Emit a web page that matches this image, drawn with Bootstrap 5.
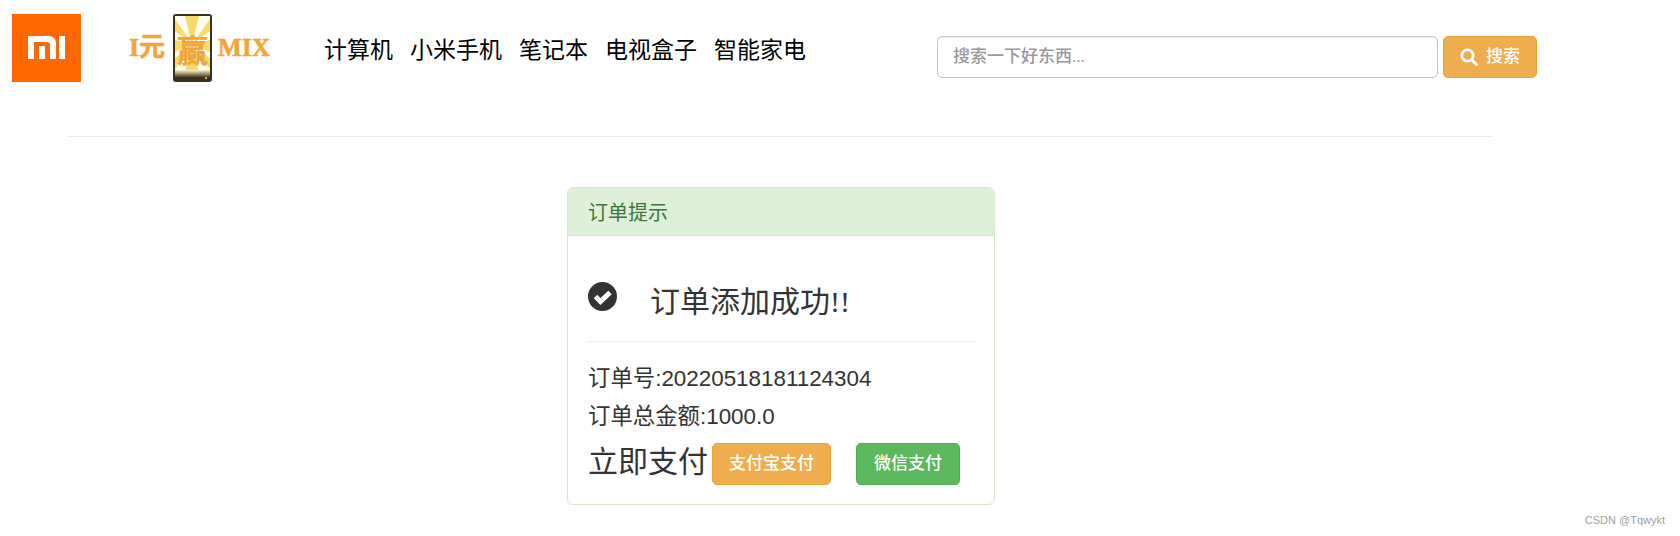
<!DOCTYPE html>
<html lang="zh-CN">
<head>
<meta charset="utf-8">
<title>订单提示</title>
<link rel="stylesheet" href="https://cdn.jsdelivr.net/npm/bootstrap@5.3.0/dist/css/bootstrap.min.css">
<style>
html,body{height:536px;overflow:hidden}
body{position:relative;background:#fff;color:#333;font-family:"Liberation Sans","Noto Sans CJK SC",sans-serif}
.site-head{height:136px;padding:14px 0 0 12px}
.mi-logo{width:69px;height:68px;display:block;flex:none}
.win-logo{width:142px;height:68px;display:block;flex:none;margin-left:48px}
.main-nav{margin-left:53px;margin-top:20px;gap:17px}
.main-nav a{color:#000;font-size:23px;line-height:32px;text-decoration:none;font-weight:400;padding:0}
.search-box{width:600px;margin-top:22px;gap:5px}
.search-spacer{width:131px;flex:none}
.search-box .form-control{width:501px;height:42px;flex:none;border:1px solid #c4c4c4;border-radius:5px;font:500 17px/1.4 "Liberation Serif","Noto Sans CJK SC",serif;padding:6px 15px;box-shadow:inset 0 1px 1px rgba(0,0,0,.075)}
.search-box .form-control::placeholder{color:#999;opacity:1}
.act-btn{font:500 17px/24px "Liberation Serif","Noto Sans CJK SC",serif;color:#fff;border-radius:5px;height:42px;padding:8px 16px}
.act-btn:hover{color:#fff}
.btn-orange{background:#f0ad4e;border:1px solid #eea236}
.btn-green{background:#5cb85c;border:1px solid #4cae4c}
.search-btn{width:94px;padding:8px 0;display:flex;align-items:center;justify-content:center;gap:8px}
.head-rule{margin:0 187px 0 68px;border:0;border-top:1px solid #eee;opacity:1}
.order-panel{width:428px;height:318px;margin:50px 0 0 567px;border:1px solid #d6e9c6;border-radius:6px;--bs-card-bg:#fff}
.order-panel .card-header{height:48px;background:#dff0d8;color:#3c763d;border-bottom:1px solid #d6e9c6;font:400 20px/26px "Liberation Serif","Noto Sans CJK SC",serif;padding:12px 20px;border-radius:5px 5px 0 0}
.order-panel .card-body{padding:46px 19px 0 20px}
.ok-icon{width:29px;height:29px;flex:none}
.ok-text{font:400 30px/36px "Liberation Serif","Noto Sans CJK SC",serif;margin:2px 0 0 33px;color:#333}
.ok-row{height:59px}
.panel-rule{margin:0 0 18px -1px;border:0;border-top:1px solid #eee;opacity:1}
.order-line{font-size:22.4px;line-height:38px;margin:0;color:#333}
.pay-row{margin-top:5px}
.pay-label{font:400 30px/42px "Liberation Serif","Noto Sans CJK SC",serif;color:#333;margin-right:4px}
.pay-row .act-btn{margin-top:2px}
.pay-gap{margin-left:25px;padding-left:17px;padding-right:17px}
.watermark{position:absolute;right:15px;bottom:9px;font:11px/13px "Liberation Sans",sans-serif;color:#a0a0a0}
</style>
</head>
<body>
<header class="site-head d-flex align-items-start">
  <svg class="mi-logo" viewBox="0 0 69 68" role="img" aria-label="小米">
    <rect width="69" height="68" fill="#ff6700"/>
    <path fill="#fff" d="M16 22H37C41 22 44 25 44 29V45H38V31C38 29 37 28 35 28H22V45H16ZM27 32H33V45H27ZM47 22H53V45H47Z"/>
  </svg>
  <svg class="win-logo" viewBox="0 0 142 68" role="img" aria-label="1元赢MIX">
    <defs><linearGradient id="chin" x1="0" y1="0" x2="0" y2="1"><stop offset="0" stop-color="#fff3c4"/><stop offset="1" stop-color="#2e2410"/></linearGradient></defs>
    <rect x="44" y="0" width="39" height="68" rx="3" fill="#3b3019"/>
    <rect x="46" y="2" width="35" height="60" fill="#fffdf2"/>
    <path fill="#f9d96b" d="M63 30 56 2H70ZM63 30 46 5V17ZM63 30 81 5V17ZM63 30 46 26V38ZM63 30 81 26V38ZM63 30 46 44V55ZM63 30 81 44V55ZM63 30 55 62H71Z"/>
    <rect x="46" y="56" width="35" height="8" fill="url(#chin)"/>
    <circle cx="77" cy="64" r="1.2" fill="#bfa76a"/>
    <text x="63.5" y="48" text-anchor="middle" font-family="Noto Sans CJK SC" font-weight="900" font-size="31" fill="#efa73b">赢</text>
    <text x="0" y="42" font-family="Liberation Serif,Noto Sans CJK SC,serif" font-weight="700" font-size="26" fill="#efa73b" stroke="#efa73b" stroke-width=".6">I元</text>
    <text x="89" y="42" font-family="Liberation Serif,serif" font-weight="700" font-size="25" fill="#efa73b" stroke="#efa73b" stroke-width=".6" textLength="52">MIX</text>
  </svg>
  <nav class="nav main-nav flex-nowrap">
    <a class="nav-link" href="#">计算机</a>
    <a class="nav-link" href="#">小米手机</a>
    <a class="nav-link" href="#">笔记本</a>
    <a class="nav-link" href="#">电视盒子</a>
    <a class="nav-link" href="#">智能家电</a>
  </nav>
  <div class="search-spacer"></div>
  <form class="search-box d-flex">
    <input class="form-control" type="text" placeholder="搜索一下好东西...">
    <button class="btn act-btn btn-orange search-btn" type="button">
      <svg width="18" height="18" viewBox="0 0 18 18" aria-hidden="true"><circle cx="7.5" cy="7.5" r="5.7" fill="none" stroke="#fff" stroke-width="2.8"/><path d="M11.5 11.5 16.5 16.5" stroke="#fff" stroke-width="3" stroke-linecap="round"/></svg>
      <span>搜索</span>
    </button>
  </form>
</header>
<hr class="head-rule">
<section class="card order-panel">
  <div class="card-header">订单提示</div>
  <div class="card-body">
    <div class="ok-row d-flex align-items-start">
      <svg class="ok-icon" viewBox="0 0 29 29" aria-hidden="true"><circle cx="14.5" cy="14.5" r="14.5" fill="#333"/><path d="M7.5 14.5 12.5 19.5 22 10.5" fill="none" stroke="#fff" stroke-width="5"/></svg>
      <h2 class="ok-text">订单添加成功!!</h2>
    </div>
    <hr class="panel-rule">
    <p class="order-line">订单号:20220518181124304</p>
    <p class="order-line">订单总金额:1000.0</p>
    <div class="pay-row d-flex align-items-start">
      <span class="pay-label">立即支付</span>
      <a class="btn act-btn btn-orange" href="#">支付宝支付</a>
      <a class="btn act-btn btn-green pay-gap" href="#">微信支付</a>
    </div>
  </div>
</section>
<div class="watermark">CSDN @Tqwykt</div>
</body>
</html>
